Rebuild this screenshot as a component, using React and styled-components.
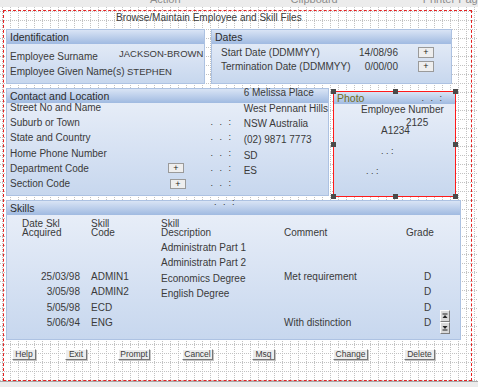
import React from "react";
import styled, { createGlobalStyle } from "styled-components";

const GlobalStyle = createGlobalStyle`
  html, body { margin: 0; padding: 0; background: #ececec; overflow: hidden; }
  body { font-family: "Liberation Sans", Arial, sans-serif; font-size: 10px; color: #3a3a3a; }
`;

const Screen = styled.div`
  width: 478px;
  height: 387px;
  overflow: hidden;
  background: #ececec;
`;

const Ribbon = styled.div`
  height: 7px;
  overflow: hidden;
  display: flex;
  padding-left: 150px;
`;

const RibbonLabel = styled.span`
  margin-left: ${p => p.$ml || 0}px;
  margin-top: -6px;
  font-size: 11px;
  line-height: 11px;
  color: #8c8c8c;
  white-space: nowrap;
`;

const Canvas = styled.div`
  height: 375px;
  box-sizing: border-box;
  padding: 3px 0 0 3px;
  border-bottom: 1px solid #a9a9a9;
  background-color: #fff;
  background-image:
    conic-gradient(from 270deg at 1px 1px, #c2c2c2 25%, transparent 0),
    conic-gradient(from 270deg at 1px 1px, #c2c2c2 25%, transparent 0);
  background-size: 8px 2px, 2px 9px;
  background-position: 2px 0, 0 4px;
`;

const Frame = styled.div`
  width: 469px;
  height: 371px;
  box-sizing: border-box;
  border: 1px dashed #e42020;
  padding-left: 2px;
  display: flex;
  flex-direction: column;
`;

const Title = styled.div`
  height: 18px;
  line-height: 14px;
  padding-left: 110px;
  white-space: nowrap;
`;

const PanelRow = styled.div`
  display: flex;
  align-items: flex-start;
  gap: ${p => p.$gap}px;
  margin-top: ${p => p.$mt || 0}px;
`;

const Panel = styled.section`
  position: relative;
  box-sizing: border-box;
  width: ${p => p.$w}px;
  height: ${p => p.$h}px;
  margin-top: ${p => p.$mt || 0}px;
  border: 1px solid #adc2e2;
  background: linear-gradient(#ebf0f9, #c7d7ee);
  display: flex;
  flex-direction: column;
  flex: none;
`;

const PanelHead = styled.div`
  flex: none;
  height: ${p => p.$h || 14}px;
  line-height: ${p => p.$h || 14}px;
  padding: 0 3px;
  background: linear-gradient(#d9e4f5, #a0bae1);
  color: ${p => p.$tone || "#2c2c2c"};
  font-size: 10.5px;
  display: flex;
  justify-content: space-between;
  white-space: nowrap;
`;

const Text = styled.span`
  white-space: nowrap;
`;

/* Identification */
const IdentBody = styled.div`
  padding: 5px 0 0 3px;
`;

const IdentRow = styled.div`
  display: flex;
  align-items: center;
  height: 15px;
`;

const IdentLabel = styled.span`
  width: 109px;
  flex: none;
  white-space: nowrap;
`;

const IdentValue = styled.span`
  margin-left: ${p => p.$ml || 0}px;
  margin-top: ${p => p.$lift ? -p.$lift * 2 : 0}px;
  font-size: 9.5px;
  white-space: nowrap;
`;

/* Dates */
const DatesBody = styled.div`
  padding: 1px 0 0 9px;
  display: grid;
  grid-template-columns: 120px 57px 36px;
  grid-auto-rows: 14px;
  align-items: center;
`;

const DateValue = styled.span`
  text-align: right;
  white-space: nowrap;
`;

const PlusButton = styled.div`
  box-sizing: border-box;
  width: 16px;
  height: ${p => p.$h || 11}px;
  margin-left: ${p => p.$ml || 0}px;
  background: #eeeeee;
  border: 1px solid;
  border-color: #ffffff #5e5e5e #5e5e5e #ffffff;
  outline: 1px solid #9a9a9a;
  outline-offset: -1px;
  font-size: 9px;
  line-height: 8px;
  text-align: center;
  color: #222;
`;

/* Contact */
const ContactBody = styled.div`
  display: flex;
  padding-left: 3px;
`;

const LabelCol = styled.div`
  width: 205px;
  margin-top: -3px;
  display: grid;
  grid-auto-rows: 15.2px;
`;

const LabelRow = styled.div`
  display: grid;
  grid-template-columns: 158px auto;
  align-items: center;
`;

const DotCol = styled.div`
  width: 34px;
  margin-top: -3px;
  display: grid;
  grid-auto-rows: 15.2px;
  align-items: center;
`;

const Dots = styled.span`
  font-size: 9px;
  letter-spacing: 2px;
  color: #333;
  white-space: nowrap;
  line-height: ${p => p.$lh || 9}px;
  margin-right: ${p => p.$mr || 0}px;
`;

const ValueCol = styled.div`
  margin-top: -18px;
  display: grid;
  grid-auto-rows: 15.6px;
  align-items: center;
`;

/* Photo (selected in the designer) */
const Selection = styled.div`
  position: absolute;
  inset: -1px;
  border: 1px solid #ff1a1a;
  z-index: 2;
  pointer-events: none;
`;

const Handle = styled.i`
  position: absolute;
  width: 5px;
  height: 5px;
  background: #4a4a4a;
  ${p => p.$v === "top" ? "top: -3px;" : p.$v === "bottom" ? "bottom: -3px;" : "top: calc(50% - 2px);"}
  ${p => p.$h === "left" ? "left: -3px;" : p.$h === "right" ? "right: -3px;" : "left: calc(50% - 2px);"}
`;

const PhotoBody = styled.div`
  display: flex;
  flex-direction: column;
  align-items: flex-start;
  line-height: 12px;
`;

const Spot = styled.span`
  margin-left: ${p => p.$x}px;
  margin-top: ${p => p.$y || 0}px;
  white-space: nowrap;
  font-size: ${p => p.$fs || 10}px;
`;

/* Skills */
const SkillsBody = styled.div`
  display: flex;
  padding: 5px 0 0 15px;
`;

const SkillCol = styled.div`
  width: ${p => p.$w}px;
  flex: none;
  display: flex;
  flex-direction: column;
  padding-right: ${p => p.$pr || 0}px;
  box-sizing: border-box;
`;

const ColHead = styled.div`
  height: 17px;
  line-height: 8.5px;
  display: flex;
  flex-direction: column;
  justify-content: flex-end;
  white-space: nowrap;
`;

const CellList = styled.div`
  margin-top: ${p => p.$mt}px;
  padding-left: ${p => p.$pl || 0}px;
  display: grid;
  grid-auto-rows: 15.33px;
  align-items: center;
  justify-items: ${p => p.$right ? "end" : "start"};
  white-space: nowrap;
`;

const ScrollCol = styled.div`
  margin-top: 90px;
  display: flex;
  flex-direction: column;
`;

const ScrollButton = styled.div`
  box-sizing: border-box;
  width: 10px;
  height: 12px;
  background: #d9d9d9;
  border: 1px solid;
  border-color: #fbfbfb #7c7c7c #7c7c7c #fbfbfb;
  display: flex;
  align-items: center;
  justify-content: center;
`;

const Marker = styled.span`
  position: absolute;
  top: ${p => p.$top}px;
  left: ${p => p.$left}px;
  font-size: 9px;
  letter-spacing: 2px;
  line-height: 9px;
  color: #333;
`;

/* Buttons */
const ButtonBar = styled.div`
  display: flex;
  margin-top: 9px;
`;

const Button = styled.div`
  box-sizing: border-box;
  width: ${p => p.$w}px;
  height: 11px;
  margin-left: ${p => p.$ml}px;
  background: #ededed;
  border: 1px solid;
  border-color: #ffffff #777777 #777777 #ffffff;
  box-shadow: 1px 1px 0 #c4c4c4;
  font-size: 8.5px;
  line-height: 9px;
  text-align: center;
  color: #3a3a3a;
  white-space: nowrap;
`;

function Arrow({ down }) {
  return (
    <svg width="6" height="6" viewBox="0 0 6 6">
      {down ? (
        <>
          <polygon points="0.5,1 5.5,1 3,4" fill="#222" />
          <rect x="0.5" y="4.5" width="5" height="1" fill="#222" />
        </>
      ) : (
        <>
          <rect x="0.5" y="0.5" width="5" height="1" fill="#222" />
          <polygon points="0.5,5 5.5,5 3,2" fill="#222" />
        </>
      )}
    </svg>
  );
}

const contactLabels = [
  ["Street No and Name"],
  ["Suburb or Town"],
  ["State and Country"],
  ["Home Phone Number"],
  ["Department Code", 0],
  ["Section Code", 2],
];

const contactValues = ["6 Melissa Place", "West Pennant Hills", "NSW Australia", "(02) 9871 7773", "SD", "ES"];

const handles = [
  ["top", "left"], ["top", "mid"], ["top", "right"],
  ["mid", "left"], ["mid", "right"],
  ["bottom", "left"], ["bottom", "mid"], ["bottom", "right"],
];

const buttons = [
  ["Help", 24, 6],
  ["Exit", 22, 29],
  ["Prompt", 32, 31],
  ["Cancel", 31, 32],
  ["Msq", 23, 39],
  ["Change", 35, 58],
  ["Delete", 31, 36],
];

export default function App() {
  return (
    <Screen>
      <GlobalStyle />
      <Ribbon>
        <RibbonLabel>Action</RibbonLabel>
        <RibbonLabel $ml={110}>Clipboard</RibbonLabel>
        <RibbonLabel $ml={85}>Printer Page</RibbonLabel>
      </Ribbon>
      <Canvas>
        <Frame>
          <Title>Browse/Maintain Employee and Skill Files</Title>

          <PanelRow $gap={6}>
            <Panel $w={199} $h={55}>
              <PanelHead>Identification</PanelHead>
              <IdentBody>
                <IdentRow>
                  <IdentLabel>Employee Surname</IdentLabel>
                  <IdentValue $lift={3}>JACKSON-BROWN</IdentValue>
                </IdentRow>
                <IdentRow>
                  <IdentLabel>Employee Given Name(s)</IdentLabel>
                  <IdentValue $ml={8}>STEPHEN</IdentValue>
                </IdentRow>
              </IdentBody>
            </Panel>
            <Panel $w={241} $h={55}>
              <PanelHead>Dates</PanelHead>
              <DatesBody>
                <Text>Start Date (DDMMYY)</Text>
                <DateValue>14/08/96</DateValue>
                <PlusButton $ml={20}>+</PlusButton>
                <Text>Termination Date (DDMMYY)</Text>
                <DateValue>0/00/00</DateValue>
                <PlusButton $ml={20}>+</PlusButton>
              </DatesBody>
            </Panel>
          </PanelRow>

          <PanelRow $gap={4} $mt={4}>
            <Panel $w={323} $h={108}>
              <PanelHead>Contact and Location</PanelHead>
              <ContactBody>
                <LabelCol>
                  {contactLabels.map(([label, btn]) => (
                    <LabelRow key={label}>
                      <Text>{label}</Text>
                      {btn !== undefined && <PlusButton $h={10} $ml={btn}>+</PlusButton>}
                    </LabelRow>
                  ))}
                </LabelCol>
                <DotCol>
                  <span />
                  {[0, 1, 2, 3, 4].map(i => <Dots key={i}>. . :</Dots>)}
                </DotCol>
                <ValueCol>
                  {contactValues.map(v => <Text key={v}>{v}</Text>)}
                </ValueCol>
              </ContactBody>
            </Panel>
            <Panel $w={123} $h={106} $mt={3}>
              <PanelHead $h={12} $tone="#6f6b1c">
                <span>Photo</span>
                <Dots $lh={12} $mr={8}>. . :</Dots>
              </PanelHead>
              <PhotoBody>
                <Spot $x={27}>Employee Number</Spot>
                <Spot $x={72} $y={1}>2125</Spot>
                <Spot $x={47} $y={-4}>A1234</Spot>
                <Spot $x={47} $y={8} $fs={9}>. . :</Spot>
                <Spot $x={32} $y={8} $fs={9}>. . :</Spot>
              </PhotoBody>
              <Selection>
                {handles.map(([v, h]) => <Handle key={v + h} $v={v} $h={h} />)}
              </Selection>
            </Panel>
          </PanelRow>

          <PanelRow $gap={0} $mt={3}>
            <Panel $w={455} $h={140}>
              <Marker $top={-3} $left={207}>. . :</Marker>
              <PanelHead>Skills</PanelHead>
              <SkillsBody>
                <SkillCol $w={69} $pr={11}>
                  <ColHead><span>Date Skl</span><span>Acquired</span></ColHead>
                  <CellList $mt={32} $right>
                    <span>25/03/98</span>
                    <span>3/05/98</span>
                    <span>5/05/98</span>
                    <span>5/06/94</span>
                  </CellList>
                </SkillCol>
                <SkillCol $w={70}>
                  <ColHead><span>Skill</span><span>Code</span></ColHead>
                  <CellList $mt={32}>
                    <span>ADMIN1</span>
                    <span>ADMIN2</span>
                    <span>ECD</span>
                    <span>ENG</span>
                  </CellList>
                </SkillCol>
                <SkillCol $w={123}>
                  <ColHead><span>Skill</span><span>Description</span></ColHead>
                  <CellList $mt={3}>
                    <span>Administratn Part 1</span>
                    <span>Administratn Part 2</span>
                    <span>Economics Degree</span>
                    <span>English Degree</span>
                  </CellList>
                </SkillCol>
                <SkillCol $w={122}>
                  <ColHead><span>Comment</span></ColHead>
                  <CellList $mt={32}>
                    <span>Met requirement</span>
                    <span />
                    <span />
                    <span>With distinction</span>
                  </CellList>
                </SkillCol>
                <SkillCol $w={34}>
                  <ColHead><span>Grade</span></ColHead>
                  <CellList $mt={32} $pl={18}>
                    <span>D</span>
                    <span>D</span>
                    <span>D</span>
                    <span>D</span>
                  </CellList>
                </SkillCol>
                <ScrollCol>
                  <ScrollButton><Arrow /></ScrollButton>
                  <ScrollButton><Arrow down /></ScrollButton>
                </ScrollCol>
              </SkillsBody>
            </Panel>
          </PanelRow>

          <ButtonBar>
            {buttons.map(([label, w, ml]) => (
              <Button key={label} $w={w} $ml={ml}>{label}</Button>
            ))}
          </ButtonBar>
        </Frame>
      </Canvas>
    </Screen>
  );
}
